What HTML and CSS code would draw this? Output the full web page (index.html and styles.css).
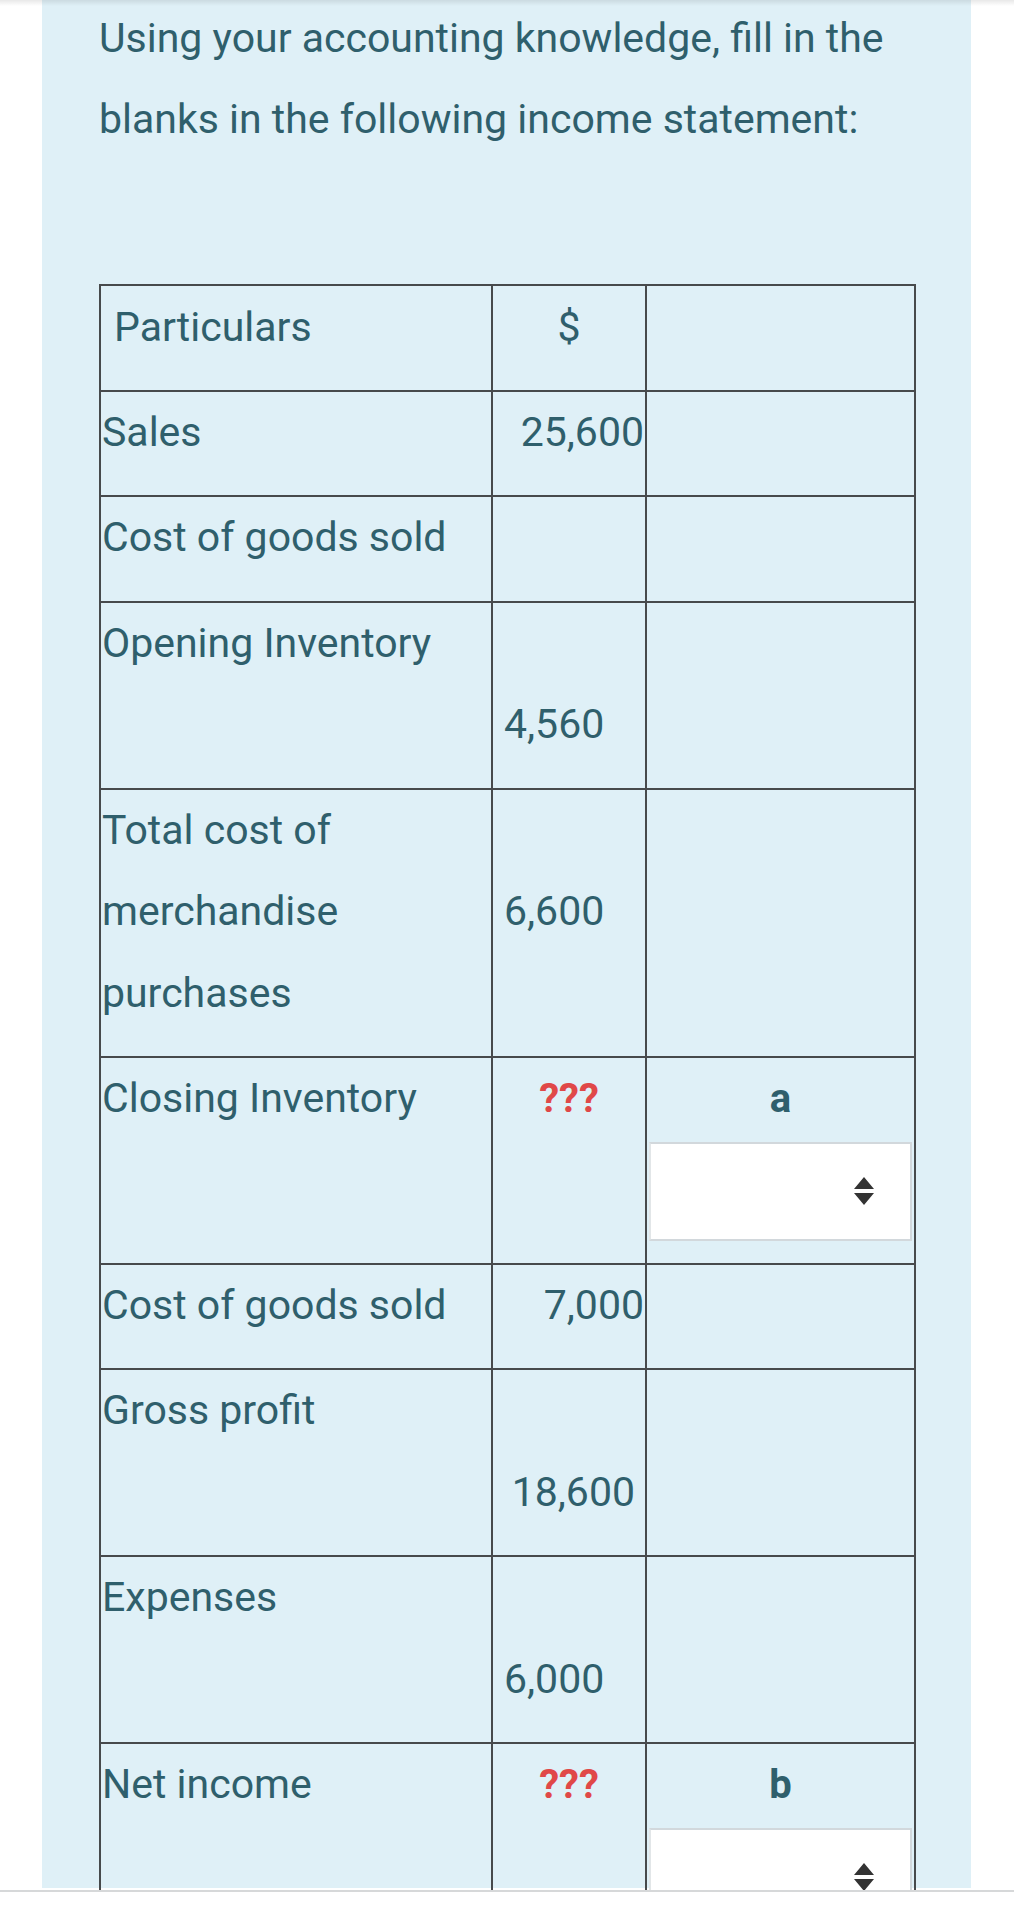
FILE: index.html
```html
<!DOCTYPE html>
<html lang="en">
<head>
<meta charset="utf-8">
<title>Income statement</title>
<link rel="stylesheet" href="styles.css">
</head>
<body>
<div class="screen">
  <div class="top-shade"></div>
  <div class="panel">
    <p class="question">Using your accounting knowledge, fill in the blanks in the following income statement:</p>
    <table class="statement">
      <colgroup><col class="c-part"><col class="c-amt"><col class="c-ans"></colgroup>
      <tr class="head">
        <td class="label pad">Particulars</td>
        <td class="center">$</td>
        <td></td>
      </tr>
      <tr>
        <td class="label">Sales</td>
        <td class="right">25,600</td>
        <td></td>
      </tr>
      <tr>
        <td class="label">Cost of goods sold</td>
        <td></td>
        <td></td>
      </tr>
      <tr>
        <td class="label">Opening Inventory</td>
        <td class="second indent">4,560</td>
        <td></td>
      </tr>
      <tr>
        <td class="label">Total cost of merchandise purchases</td>
        <td class="second indent">6,600</td>
        <td></td>
      </tr>
      <tr>
        <td class="label">Closing Inventory</td>
        <td class="center missing">???</td>
        <td class="ans">
          <div class="ans-letter">a</div>
          <div class="picker"><svg class="updown" width="20" height="28" viewBox="0 0 20 28"><path d="M10 0 L20 12 L0 12 Z M0 16 L20 16 L10 28 Z"/></svg></div>
        </td>
      </tr>
      <tr>
        <td class="label">Cost of goods sold</td>
        <td class="right">7,000</td>
        <td></td>
      </tr>
      <tr>
        <td class="label">Gross profit</td>
        <td class="second right inset">18,600</td>
        <td></td>
      </tr>
      <tr>
        <td class="label">Expenses</td>
        <td class="second indent">6,000</td>
        <td></td>
      </tr>
      <tr>
        <td class="label">Net income</td>
        <td class="center missing">???</td>
        <td class="ans">
          <div class="ans-letter">b</div>
          <div class="picker"><svg class="updown" width="20" height="28" viewBox="0 0 20 28"><path d="M10 0 L20 12 L0 12 Z M0 16 L20 16 L10 28 Z"/></svg></div>
        </td>
      </tr>
    </table>
  </div>
</div>
<div class="bottom-rule"></div>
</body>
</html>
```

FILE: styles.css
```css
html, body {
  margin: 0;
  padding: 0;
  background: #ffffff;
}

body {
  font-family: Roboto, "Noto Sans", "Liberation Sans", sans-serif;
}

.screen {
  position: relative;
  height: 1890px;
  overflow: hidden;
}

.top-shade {
  position: absolute;
  left: 0;
  right: 0;
  top: 0;
  height: 6px;
  background: linear-gradient(rgba(0, 0, 0, 0.09), rgba(0, 0, 0, 0));
}

.panel {
  margin: 0 43px 0 42px;
  height: 100%;
  box-sizing: border-box;
  padding: 0 57px;
  background: #dff0f7;
  color: #2f5f6c;
}

.question {
  margin: -2px 0 124px;
  font-size: 41px;
  line-height: 81px;
}

.statement {
  border-collapse: collapse;
  table-layout: fixed;
  width: 815px;
  font-size: 41px;
  line-height: 81.5px;
}

.c-part { width: 392px; }
.c-amt { width: 154px; }
.c-ans { width: 269px; }

.statement td {
  border: 2px solid #474a4c;
  padding: 0 1px 22px;
  vertical-align: top;
}

.statement .head td {
  padding-top: 1px;
  padding-bottom: 21px;
}

.statement td.pad {
  padding-left: 13px;
}

.statement td.center {
  text-align: center;
}

.statement td.right {
  text-align: right;
}

.statement td.inset {
  padding-right: 10px;
}

.statement td.indent {
  padding-left: 11px;
}

.statement td.second {
  padding-top: 81.5px;
}

.statement td.missing {
  color: #e04848;
  font-weight: bold;
  font-size: 40px;
}

.statement td.ans {
  text-align: center;
  padding: 0 2px 22px;
}

.ans-letter {
  font-weight: bold;
  font-size: 40px;
  line-height: 81.5px;
}

.picker {
  margin-top: 2px;
  height: 99px;
  box-sizing: border-box;
  background: #ffffff;
  border: 2px solid #d2d8dc;
  border-left-color: #e2e6e8;
  display: flex;
  align-items: center;
  justify-content: flex-end;
  padding-right: 36px;
}

.updown {
  display: block;
  fill: #333333;
}

.bottom-rule {
  height: 2px;
  background: #d6d8d9;
}
```
